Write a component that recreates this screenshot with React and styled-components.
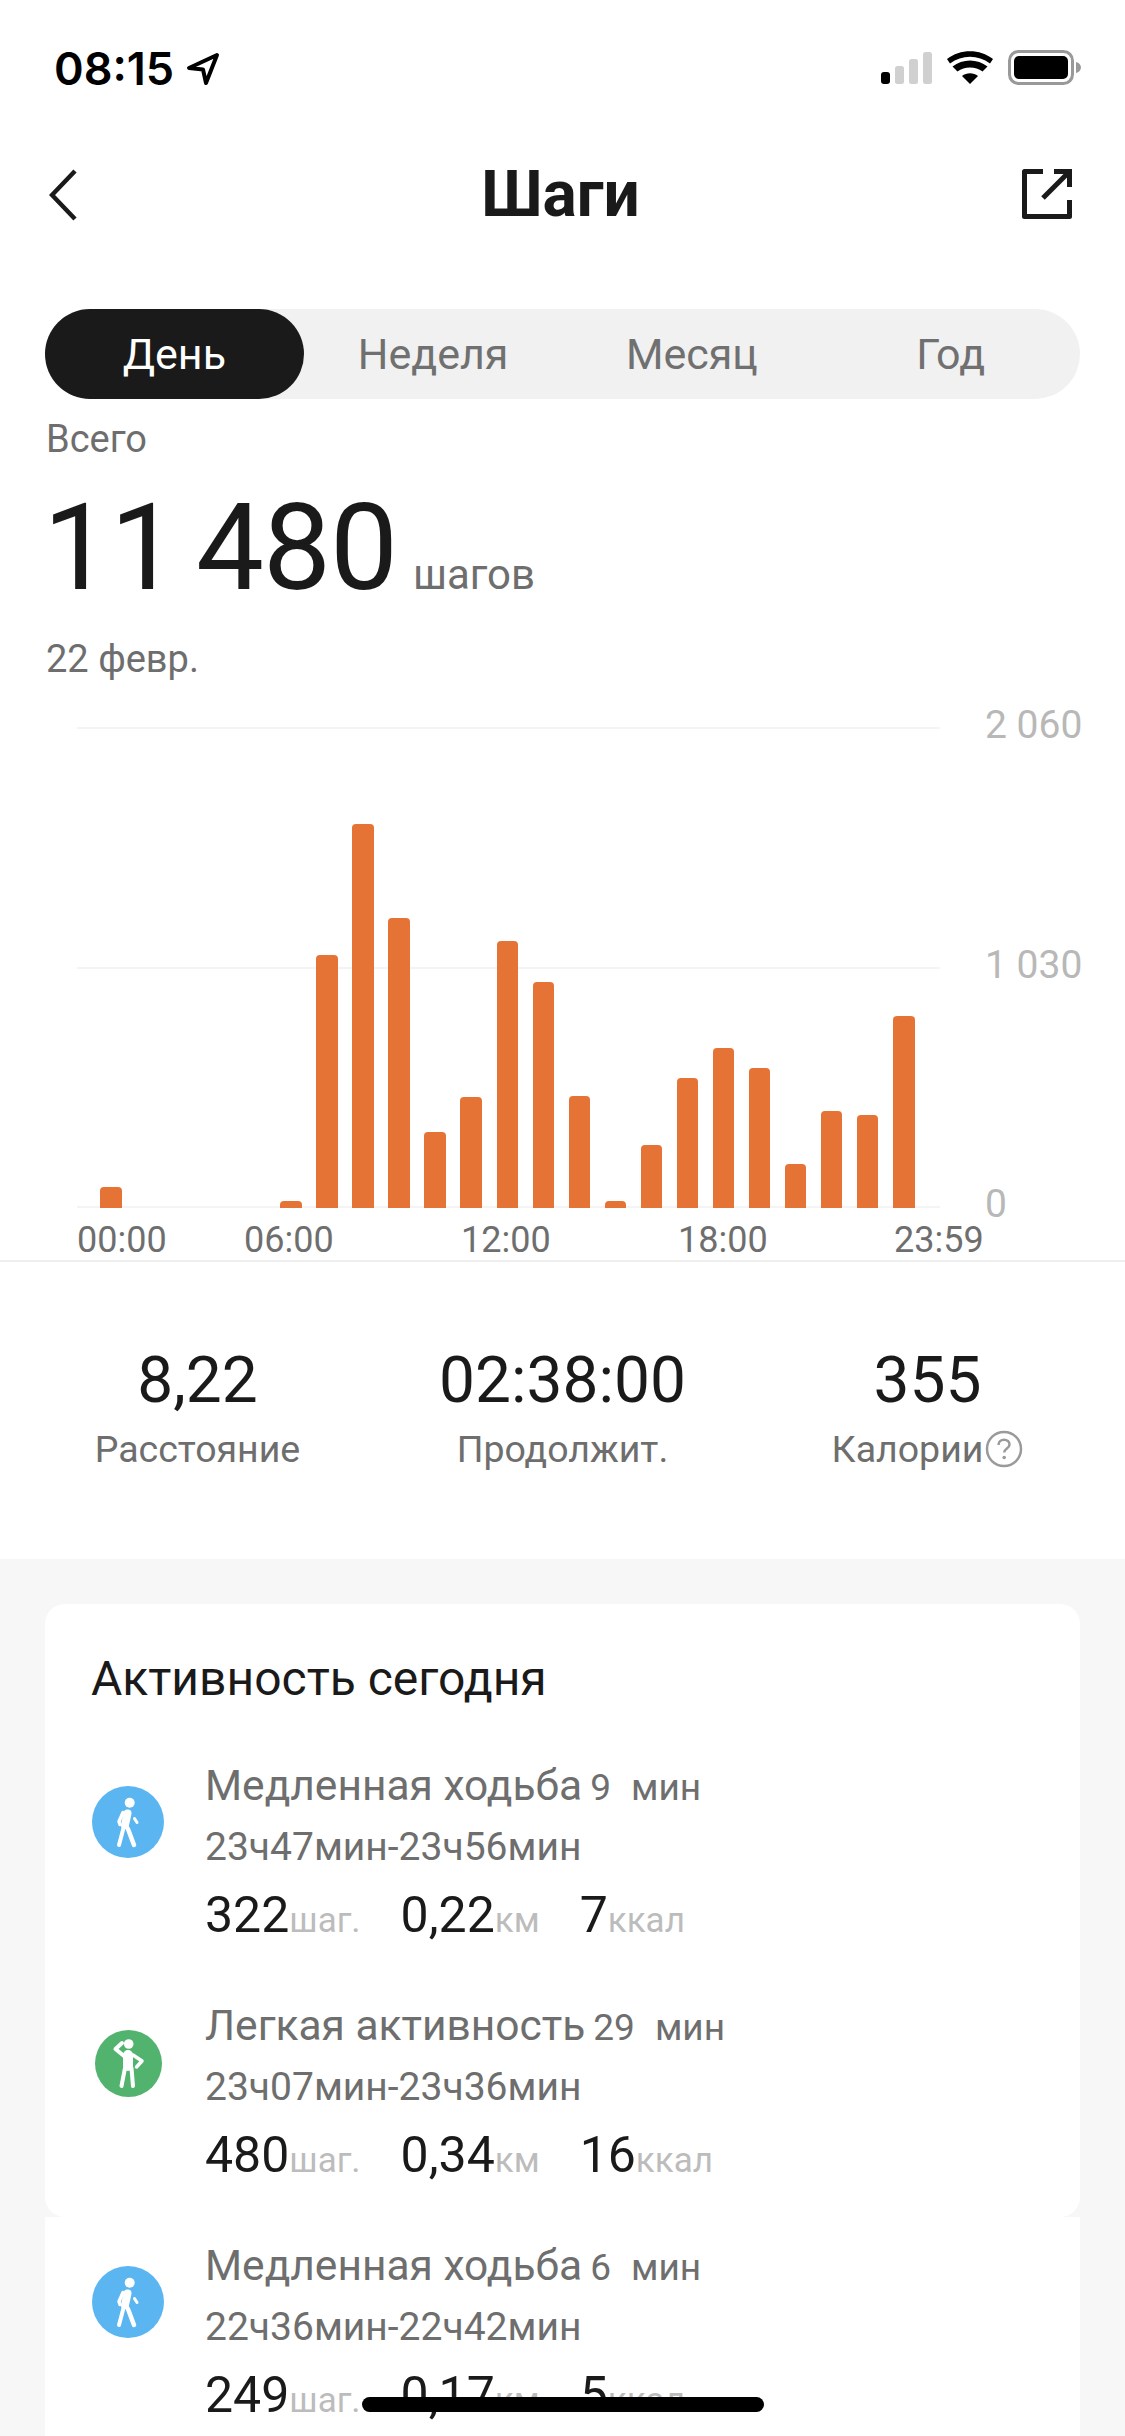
import React from "react";
import styled, { createGlobalStyle } from "styled-components";

const GlobalStyle = createGlobalStyle`
  html, body {
    margin: 0;
    padding: 0;
    background: #fff;
    font-family: Roboto, "Noto Sans", sans-serif;
    color: #1a1a1a;
  }
  * { box-sizing: border-box; }
`;

const Screen = styled.div`
  position: relative;
  width: 1125px;
  height: 2436px;
  overflow: hidden;
  background: #f7f7f7;
`;

const Top = styled.div`
  background: #fff;
`;

const StatusBar = styled.div`
  height: 139px;
  padding: 50px 43px 0 54px;
  display: flex;
  justify-content: space-between;
  align-items: flex-start;
`;

const Time = styled.div`
  display: flex;
  align-items: center;
  gap: 12px;
  font-family: Inter, Roboto, sans-serif;
  font-weight: 600;
  font-size: 45px;
  line-height: 38px;
  color: #000;
`;

const StatusIcons = styled.div`
  display: flex;
  align-items: center;
  gap: 15px;
`;

const NavBar = styled.div`
  height: 170px;
  padding: 30px 53px 0 49px;
  display: grid;
  grid-template-columns: 1fr auto 1fr;
  align-items: start;
`;

const NavRight = styled.div`
  display: flex;
  justify-content: flex-end;
`;

const Title = styled.h1`
  margin: 0;
  font-size: 64px;
  line-height: 52px;
  font-weight: 700;
  color: #1a1a1a;
`;

const Tabs = styled.div`
  margin: 0 45px;
  height: 90px;
  display: grid;
  grid-template-columns: repeat(4, 1fr);
  background: #f1f1f1;
  border-radius: 45px;
`;

const Tab = styled.div`
  display: flex;
  align-items: center;
  justify-content: center;
  font-size: 43px;
  border-radius: 45px;
  background: ${({ $active }) => ($active ? "#1a1a1a" : "transparent")};
  color: ${({ $active }) => ($active ? "#fff" : "#707070")};
`;

const Summary = styled.div`
  padding: 20px 46px 0;
`;

const SmallLabel = styled.div`
  font-size: 38px;
  line-height: 40px;
  color: #6e6e6e;
`;

const TotalRow = styled.div`
  display: flex;
  align-items: baseline;
  gap: 16px;
  height: 180px;
  padding-top: 19px;
`;

const Total = styled.span`
  font-size: 121px;
  line-height: 140px;
  font-weight: 400;
  margin-left: -3px;
  letter-spacing: -1px;
  word-spacing: -10px;
  color: #1a1a1a;
`;

const TotalUnit = styled.span`
  font-size: 42px;
  color: #6e6e6e;
`;

const Chart = styled.div`
  margin-top: 48px;
  padding-left: 77px;
  position: relative;
`;

const GridLines = styled.div`
  height: 481px;
  display: flex;
  flex-direction: column;
  justify-content: space-between;
`;

const GridRow = styled.div`
  height: 2px;
  display: flex;
  align-items: center;
`;

const GridLine = styled.div`
  width: 863px;
  height: 2px;
  background: #f4f4f4;
`;

const AxisValue = styled.span`
  margin-left: 45px;
  font-size: 39px;
  line-height: 40px;
  color: #b8b8b8;
  white-space: nowrap;
  transform: translateY(-3px);
`;

const Bars = styled.div`
  position: absolute;
  left: 100px;
  top: 0;
  height: 481px;
  display: flex;
  align-items: flex-end;
  gap: 14.550px;
`;

const Bar = styled.div`
  width: 21.500px;
  background: #e57336;
  border-radius: 4px 4px 0 0;
`;

const TimeAxis = styled.div`
  height: 40px;
  margin-top: 10px;
  display: grid;
  grid-template-columns: 167px 217px 217px 216px auto;
  font-size: 36px;
  line-height: 44px;
  color: #6e6e6e;
`;

const Divider = styled.div`
  height: 2px;
  margin-top: 2px;
  background: #eeeeee;
`;

const Stats = styled.div`
  height: 297px;
  padding: 83px 15px 0;
  display: grid;
  grid-template-columns: repeat(3, 1fr);
  text-align: center;
`;

const StatValue = styled.div`
  font-size: 64px;
  line-height: 72px;
  color: #1a1a1a;
`;

const StatLabel = styled.div`
  display: flex;
  justify-content: center;
  align-items: center;
  gap: 2px;
  margin-top: 10px;
  font-size: 37.500px;
  line-height: 44px;
  color: #6e6e6e;
`;

const Cards = styled.div`
  padding-top: 45px;
`;

const Card = styled.div`
  margin: 0 45px;
  padding: 0 46px 34px;
  background: #fff;
  border-radius: 20px;
`;

const FlatCard = styled(Card)`
  padding-top: 27px;
  border-radius: 0;
`;

const CardTitle = styled.div`
  padding-top: 48px;
  height: 160px;
  font-size: 48px;
  line-height: 54px;
  color: #1a1a1a;
`;

const Row = styled.div`
  display: flex;
  align-items: flex-start;
  height: 179px;
  & + & {
    margin-top: 61px;
  }
`;

const IconCircle = styled.div`
  flex: none;
  width: ${({ $size }) => $size}px;
  height: ${({ $size }) => $size}px;
  margin: ${({ $size, $center }) => $center - $size / 2}px ${({ $size }) => 37 - $size / 2}px 0;
  border-radius: 50%;
  background: ${({ $color }) => $color};
  display: flex;
  align-items: center;
  justify-content: center;
`;

const RowText = styled.div`
  margin-left: 40px;
`;

const ActivityName = styled.div`
  height: 61px;
  display: flex;
  align-items: baseline;
  font-size: 42.500px;
  line-height: 44px;
  color: #6e6e6e;
  white-space: nowrap;
`;

const Duration = styled.span`
  margin-left: 8px;
  font-size: 37px;
`;

const Minutes = styled.span`
  margin-left: 20px;
  font-size: 37px;
`;

const TimeRange = styled.div`
  height: 62px;
  font-size: 39px;
  line-height: 44px;
  color: #6e6e6e;
  white-space: nowrap;
`;

const Metrics = styled.div`
  display: flex;
  align-items: baseline;
  gap: 40px;
  line-height: 56px;
`;

const Metric = styled.div`
  display: flex;
  align-items: baseline;
`;

const MetricValue = styled.span`
  font-size: 50px;
  color: #1a1a1a;
`;

const MetricUnit = styled.span`
  font-size: 35px;
  color: #bcbcbc;
`;

const HomeIndicator = styled.div`
  position: absolute;
  left: 362px;
  top: 2397px;
  width: 402px;
  height: 15px;
  border-radius: 8px;
  background: #000;
`;

const bars = [
  21, 0, 0, 0, 0, 7, 253, 384, 290, 76, 111, 267, 226, 112, 7, 63, 130, 160, 140, 44, 97, 93, 192,
];

const activities = [
  {
    name: "Медленная ходьба",
    minutes: "9",
    range: "23ч47мин-23ч56мин",
    steps: "322",
    km: "0,22",
    kcal: "7",
    kind: "walk",
  },
  {
    name: "Легкая активность",
    minutes: "29",
    range: "23ч07мин-23ч36мин",
    steps: "480",
    km: "0,34",
    kcal: "16",
    kind: "light",
  },
];

const lastActivity = {
  name: "Медленная ходьба",
  minutes: "6",
  range: "22ч36мин-22ч42мин",
  steps: "249",
  km: "0,17",
  kcal: "5",
  kind: "walk",
};

const WalkFigure = () => (
  <svg width="72" height="72" viewBox="0 0 72 72" fill="none" stroke="#fff" strokeLinecap="round" strokeLinejoin="round">
    <circle cx="37.700" cy="16.700" r="5" fill="#fff" stroke="none" />
    <path d="M35.500 27.500L33 39" strokeWidth="8" />
    <path d="M33 39l3 4 6 16" strokeWidth="4.500" />
    <path d="M31.500 42L27 59" strokeWidth="4" />
    <path d="M31 26.500l-4 9 1 3" strokeWidth="3.500" />
    <path d="M42.500 32.500l2.500 4" strokeWidth="3" />
  </svg>
);

const StandFigure = () => (
  <svg width="67" height="67" viewBox="0 0 67 67" fill="none" stroke="#fff" strokeLinecap="round" strokeLinejoin="round">
    <circle cx="33.700" cy="14" r="4.800" fill="#fff" stroke="none" />
    <path d="M33 25v11" strokeWidth="10" />
    <path d="M29 26l-8.500-7 6.500-6" strokeWidth="4" />
    <path d="M38 25l9 6-5.500 6" strokeWidth="3.500" />
    <path d="M30 38l-3.500 18" strokeWidth="4" />
    <path d="M36.500 38l1.500 18" strokeWidth="4" />
  </svg>
);

const ActivityRow = ({ item }) => (
  <Row>
    {item.kind === "walk" ? (
      <IconCircle $size={72} $center={58} $color="#5ab5f0">
        <WalkFigure />
      </IconCircle>
    ) : (
      <IconCircle $size={67} $center={59} $color="#52b36f">
        <StandFigure />
      </IconCircle>
    )}
    <RowText>
      <ActivityName>
        {item.name}
        <Duration>{item.minutes}</Duration>
        <Minutes>мин</Minutes>
      </ActivityName>
      <TimeRange>{item.range}</TimeRange>
      <Metrics>
        <Metric>
          <MetricValue>{item.steps}</MetricValue>
          <MetricUnit>шаг.</MetricUnit>
        </Metric>
        <Metric>
          <MetricValue>{item.km}</MetricValue>
          <MetricUnit>км</MetricUnit>
        </Metric>
        <Metric>
          <MetricValue>{item.kcal}</MetricValue>
          <MetricUnit>ккал</MetricUnit>
        </Metric>
      </Metrics>
    </RowText>
  </Row>
);

const App = () => (
  <Screen>
    <GlobalStyle />
    <Top>
      <StatusBar>
        <Time>
          08:15
          <svg width="34" height="34" viewBox="0 0 34 34">
            <path
              d="M31 3L3 16l14 1.500L20 31z"
              fill="none"
              stroke="#000"
              strokeWidth="4"
              strokeLinejoin="round"
            />
          </svg>
        </Time>
        <StatusIcons>
          <svg width="51" height="34" viewBox="0 0 51 34">
            <rect x="0" y="21" width="9" height="12" rx="3" fill="#000" />
            <rect x="14" y="15" width="9" height="18" rx="2.500" fill="#d0d0d0" />
            <rect x="28" y="8" width="9" height="25" rx="2.500" fill="#d0d0d0" />
            <rect x="42" y="1" width="9" height="32" rx="2.500" fill="#d0d0d0" />
          </svg>
          <svg width="46" height="34" viewBox="0 0 46 34">
            <path d="M23 33l-8-8c4.500-3.700 11.500-3.700 16 0z" fill="#000" />
            <path d="M10.500 20.500l-5-5c10-8 25-8 35 0l-5 5c-7-5.500-18-5.500-25 0z" fill="#000" />
            <path d="M3 12.500L0 8c13-10.500 33-10.500 46 0l-3 4.500C31 3.500 15 3.500 3 12.500z" fill="#000" />
          </svg>
          <svg width="74" height="36" viewBox="0 0 74 36">
            <rect x="1.500" y="1.500" width="63" height="32" rx="9" fill="none" stroke="#999" strokeWidth="3" />
            <rect x="6" y="6" width="54" height="23" rx="5" fill="#000" />
            <path d="M68 12c3 .8 5 3 5 5.500s-2 4.700-5 5.500z" fill="#999" />
          </svg>
        </StatusIcons>
      </StatusBar>
      <NavBar>
        <svg width="28" height="52" viewBox="0 0 28 52">
          <path d="M26 2L3 26l23 24" fill="none" stroke="#1a1a1a" strokeWidth="4.500" />
        </svg>
        <Title>Шаги</Title>
        <NavRight>
          <svg width="50" height="50" viewBox="0 0 50 50">
            <path
              d="M21 2.500H2.500v45h45V31"
              fill="none"
              stroke="#1a1a1a"
              strokeWidth="5"
              strokeLinejoin="round"
            />
            <path d="M21 29L46 4M32 2.500h15.500V18" fill="none" stroke="#1a1a1a" strokeWidth="5" />
          </svg>
        </NavRight>
      </NavBar>
      <Tabs>
        <Tab $active>День</Tab>
        <Tab>Неделя</Tab>
        <Tab>Месяц</Tab>
        <Tab>Год</Tab>
      </Tabs>
      <Summary>
        <SmallLabel>Всего</SmallLabel>
        <TotalRow>
          <Total>11 480</Total>
          <TotalUnit>шагов</TotalUnit>
        </TotalRow>
        <SmallLabel>22 февр.</SmallLabel>
      </Summary>
      <Chart>
        <GridLines>
          <GridRow>
            <GridLine />
            <AxisValue>2 060</AxisValue>
          </GridRow>
          <GridRow>
            <GridLine />
            <AxisValue>1 030</AxisValue>
          </GridRow>
          <GridRow>
            <GridLine />
            <AxisValue>0</AxisValue>
          </GridRow>
        </GridLines>
        <Bars>
          {bars.map((h, i) => (
            <Bar key={i} style={{ height: h }} />
          ))}
        </Bars>
        <TimeAxis>
          <span>00:00</span>
          <span>06:00</span>
          <span>12:00</span>
          <span>18:00</span>
          <span>23:59</span>
        </TimeAxis>
      </Chart>
      <Divider />
      <Stats>
        <div>
          <StatValue>8,22</StatValue>
          <StatLabel>Расстояние</StatLabel>
        </div>
        <div>
          <StatValue>02:38:00</StatValue>
          <StatLabel>Продолжит.</StatLabel>
        </div>
        <div>
          <StatValue>355</StatValue>
          <StatLabel>
            Калории
            <svg width="38" height="38" viewBox="0 0 38 38">
              <circle cx="19" cy="19" r="17" fill="none" stroke="#9a9a9a" strokeWidth="2.500" />
              <path
                d="M13.500 15c0-3.200 2.400-5.300 5.500-5.300s5.500 2 5.500 4.900c0 3.900-5.300 4-5.300 8"
                fill="none"
                stroke="#9a9a9a"
                strokeWidth="2.500"
              />
              <circle cx="19.200" cy="27.500" r="1.800" fill="#9a9a9a" />
            </svg>
          </StatLabel>
        </div>
      </Stats>
    </Top>
    <Cards>
      <Card>
        <CardTitle>Активность сегодня</CardTitle>
        {activities.map((item) => (
          <ActivityRow key={item.range} item={item} />
        ))}
      </Card>
      <FlatCard>
        <ActivityRow item={lastActivity} />
      </FlatCard>
    </Cards>
    <HomeIndicator />
  </Screen>
);

export default App;
